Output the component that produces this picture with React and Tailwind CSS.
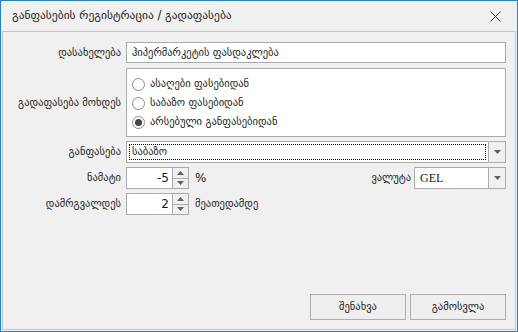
import React from "react";

const font = { fontFamily: '"DejaVu Sans", "Noto Sans", sans-serif' };

const Arrow = ({ up }) => (
  <svg width="7" height="4" viewBox="0 0 7 4">
    {up ? <path d="M0 4 L3.5 0 L7 4 Z" fill="#606060" /> : <path d="M0 0 L7 0 L3.5 4 Z" fill="#606060" />}
  </svg>
);

const Spinner = ({ value }) => (
  <div className="flex h-[22px] w-[63px]">
    <div className="flex-1 border border-[#ababab] bg-white flex items-center justify-end pr-[3px] text-[12px] text-[#1a1a1a]">
      {value}
    </div>
    <div className="w-[16px] flex flex-col border-y border-r border-[#ababab]">
      <div className="flex-1 flex items-center justify-center bg-[#f0f0f0] border-b border-[#ababab]">
        <Arrow up />
      </div>
      <div className="flex-1 flex items-center justify-center bg-[#f0f0f0]">
        <Arrow />
      </div>
    </div>
  </div>
);

const Combo = ({ value, focused, className, valueClass }) => (
  <div className={"flex h-[22px] " + className}>
    <div className="flex-1 border border-[#ababab] bg-white p-[2px]">
      <div
        className={
          "h-full flex items-center pl-[2px] text-[10.5px] text-[#1a1a1a] " +
          (focused ? "border border-dotted border-black" : "border border-transparent") +
          " " +
          (valueClass || "")
        }
      >
        {value}
      </div>
    </div>
    <div className="w-[17px] border-y border-r border-[#ababab] bg-[#f0f0f0] flex items-center justify-center">
      <Arrow />
    </div>
  </div>
);

const Radio = ({ label, checked }) => (
  <div className="flex items-center h-[19px]">
    <div className="w-[13px] h-[13px] rounded-full border border-[#8a8a8a] bg-white flex items-center justify-center">
      {checked && <div className="w-[7px] h-[7px] rounded-full bg-[#444]" />}
    </div>
    <span className="ml-[5px] text-[10.5px] text-[#1a1a1a]">{label}</span>
  </div>
);

const Label = ({ children, className }) => (
  <div className={"w-[118px] text-right text-[10.5px] text-[#1a1a1a] " + (className || "")}>{children}</div>
);

export default function App() {
  return (
    <div className="w-[518px] h-[332px] bg-[#f0f0f0] border border-[#1883d7] flex flex-col" style={font}>
      {/* სათაური */}
      <div className="h-[30px] flex items-center justify-between pl-[11px] pr-[16px]">
        <span className="text-[11.5px] text-[#1a1a1a]">განფასების რეგისტრაცია / გადაფასება</span>
        <svg width="11" height="11" viewBox="0 0 11 11">
          <path d="M0.5 0.5 L10.5 10.5 M10.5 0.5 L0.5 10.5" stroke="#333" strokeWidth="1" />
        </svg>
      </div>

      <div className="flex-1 ml-[1px] mr-[1px] mb-[1px] border border-[#c4c4c4] flex flex-col pt-[10px] pr-[9px] pb-[9px]">
        <div className="flex items-center gap-[5px]">
          <Label>დასახელება</Label>
          <div className="flex-1 h-[21px] border border-[#ababab] bg-white flex items-center pl-[5px] text-[10.5px] text-[#1a1a1a]">
            ჰიპერმარკეტის ფასდაკლება
          </div>
        </div>

        <div className="flex items-center gap-[5px] mt-[5px]">
          <Label>გადაფასება მოხდეს</Label>
          <div className="flex-1 h-[69px] border border-[#ababab] bg-white flex flex-col justify-center pl-[5px] pt-[1px]">
            <Radio label="ასაღები ფასებიდან" />
            <Radio label="საბაზო ფასებიდან" />
            <Radio label="არსებული განფასებიდან" checked />
          </div>
        </div>

        <div className="flex items-center gap-[5px] mt-[4px]">
          <Label>განფასება</Label>
          <Combo value="საბაზო" focused className="flex-1" />
        </div>

        <div className="flex items-center gap-[5px] mt-[4px]">
          <Label>ნამატი</Label>
          <Spinner value="-5" />
          <span className="ml-[1px] text-[12px] text-[#1a1a1a]">%</span>
          <div className="flex-1" />
          <span className="text-[10.5px] text-[#1a1a1a] mr-[-2px]">ვალუტა</span>
          <Combo value="GEL" className="w-[92px]" valueClass="font-['Liberation_Serif'] text-[12px]" />
        </div>

        <div className="flex items-center gap-[5px] mt-[4px]">
          <Label>დამრგვალდეს</Label>
          <Spinner value="2" />
          <span className="ml-[1px] text-[10.5px] text-[#1a1a1a]">მეათედამდე</span>
        </div>

        <div className="mt-auto flex justify-end gap-[4px]">
          <button className="w-[96px] h-[26px] border border-[#adadad] bg-[#efefef] text-[10.5px] text-[#1a1a1a]">შენახვა</button>
          <button className="w-[96px] h-[26px] border border-[#adadad] bg-[#efefef] text-[10.5px] text-[#1a1a1a]">გამოსვლა</button>
        </div>
      </div>
    </div>
  );
}
